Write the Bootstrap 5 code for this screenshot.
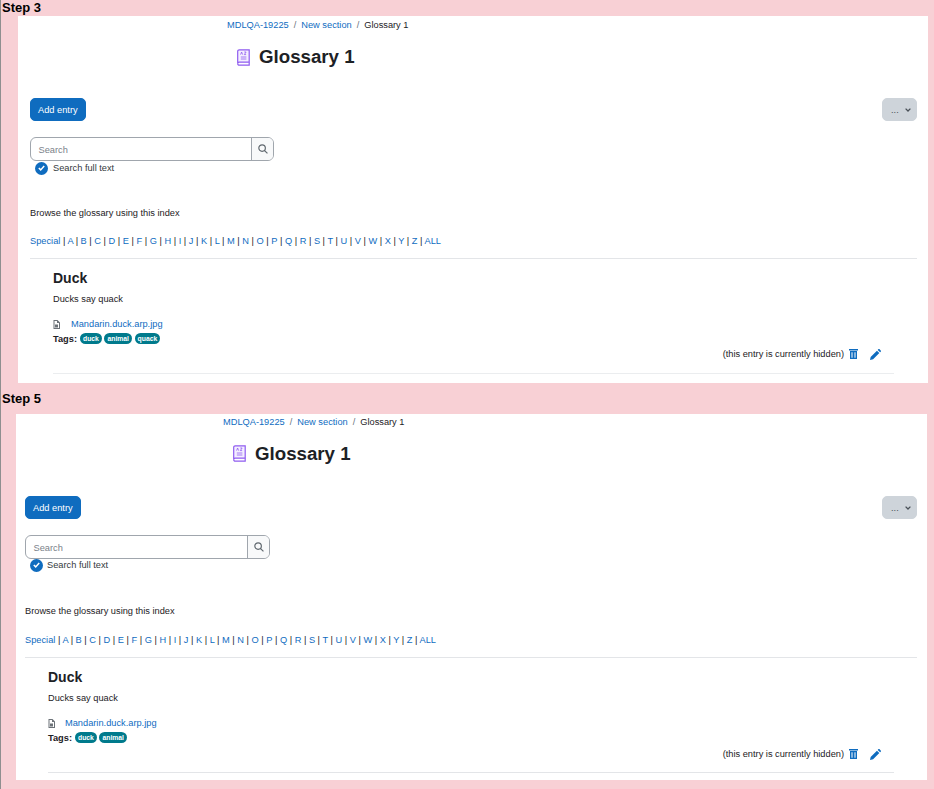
<!DOCTYPE html>
<html lang="en">
<head>
<meta charset="utf-8">
<title>Glossary 1</title>
<link href="https://cdn.jsdelivr.net/npm/bootstrap@5.3.0/dist/css/bootstrap.min.css" rel="stylesheet">
<style>
html,body{height:789px;overflow:hidden}
body{background:#f8d0d5;border-left:1px solid #8f8f8f;font-family:"Liberation Sans",Arial,sans-serif;font-size:9.25px;line-height:14px;color:#1d2125}
a{color:#0f6cbf;text-decoration:none}
.step-label{font-size:13px;font-weight:700;line-height:16px;color:#000;margin:0;padding-left:1px}
.shot{background:#fff}
.shot-a{margin:0 6px 0 17px;height:367px;padding:0 11px 0 12px}
.shot-b{margin:0 7px 0 15px;height:366px;padding:0 10px 0 9px}
.step-two{margin-top:7px;height:24px;padding-top:1px}
.crumbs{height:18px;align-items:center;white-space:nowrap}
.shot-a .crumbs{padding-left:197px}
.shot-b .crumbs{padding-left:198px;height:16px}
.sep{color:#6a737b;margin:0 5px}
.title-row{height:46px;align-items:center}
.shot-a .title-row{padding:0 0 0 207px}
.shot-b .title-row{padding:0 0 0 208px;height:47px}
.title-row svg{margin-right:9px}
.page-name{font-size:18.7px;font-weight:700;margin:0;line-height:24px;color:#1d2125}
.actions{align-items:center;justify-content:space-between;height:23px;margin-top:18px}
.shot-b .actions{margin-top:19px}
.btn.add-btn{background:#0f6cbf;border-color:#0f6cbf;color:#fff;font-size:9.25px;line-height:14px;padding:4px 7px;border-radius:5px;height:23px}
.btn.more-btn{background:#ced4da;border-color:#ced4da;color:#495057;font-size:9.25px;line-height:14px;padding:4px 0 4px 8px;border-radius:5px;width:35px;height:23px;white-space:nowrap;text-align:left}
.more-btn svg{margin-left:4px;vertical-align:1px}
.find-box{width:244px;height:24px;margin-top:16px;border:1px solid #a0a6ad;border-radius:6px;overflow:hidden}
.shot-b .find-box{width:245px}
.find-text{flex:1;padding-left:7.5px;color:#7a828a;line-height:24px}
.find-go{width:22px;border-left:1px solid #a0a6ad;background:#f8f9fa;align-items:center;justify-content:center}
.full-text{margin-left:5px;height:14px;align-items:center;gap:5px;color:#343a40}
.shot-b .full-text{margin-top:-1px;gap:4px}
.tick{width:13px;height:13px;border-radius:50%;background:#0f6cbf;align-items:center;justify-content:center}
.browse{margin:31px 0 0;height:14px}
.shot-b .browse{margin-top:32px}
.letters{margin:14px 0 0;height:14px;white-space:nowrap}
.shot-b .letters{margin-top:15px}
.rule-top{border-top:1px solid #e3e5e8;margin-top:10px}
.entry{padding:0 23px;margin:0}
.entry-name{font-size:14px;font-weight:700;line-height:17px;margin:11px 0 0;color:#1d2125}
.entry-text{margin:5px 0 0;height:14px}
.file-row{margin-top:11px;height:14px;align-items:center}
.file-row svg{margin-right:11px}
.shot-b .file-row svg{margin-right:10px}
.tags-row{height:15px;align-items:center;font-weight:700;gap:3px}
.tag-pill{background:#007a8c;color:#fff;font-size:6.8px;line-height:11px;padding:0 3px;border-radius:5.5px;font-weight:700;height:11px;display:inline-block}
.tag-list{gap:2.6px}
.state-row{justify-content:flex-end;align-items:center;height:14px;margin-top:1px;padding-right:13px}
.shot-b .state-row{margin-top:2px}
.state-row .bin{margin:0 12px 0 5px}
.rule-end{border-top:1px solid #ebedef;margin-top:12px}
.shot-b .rule-end{border-top-color:#e3e5e8;margin-top:11px}
</style>
</head>
<body>
<h2 class="step-label">Step 3</h2>
<main class="shot shot-a">
  <nav class="crumbs d-flex"><a href="#">MDLQA-19225</a><span class="sep">/</span><a href="#">New section</a><span class="sep">/</span><span>Glossary 1</span></nav>
  <div class="title-row d-flex">
    <svg width="13" height="17" viewBox="0 0 13 17" fill="#f4efff" stroke="#8f5cf0" stroke-width="1.2"><path d="M2.2.8h10v12.4h-10a1.5 1.5 0 0 0-1.5 1.5V2.300A1.500 1.500 0 0 1 2.200.8z"/><path d="M.7 14.700a1.500 1.500 0 0 0 1.500 1.500h10v-3" fill="none"/><path d="M3.600 5.600 4.600 3l1 2.600M7.300 3h1.800L7.300 5.600h1.800M3.800 8h5.600M3.800 10h5.600" fill="none" stroke-width=".8"/></svg>
    <h1 class="page-name">Glossary 1</h1>
  </div>
  <div class="actions d-flex">
    <a class="btn add-btn" href="#">Add entry</a>
    <button class="btn more-btn" type="button">... <svg width="6" height="4" viewBox="0 0 6 4" fill="none" stroke="#495057" stroke-width="1.3"><path d="m.6.6 2.400 2.400L5.400.6"/></svg></button>
  </div>
  <div class="find-box d-flex">
    <div class="find-text">Search</div>
    <div class="find-go d-flex"><svg width="10" height="10" viewBox="0 0 11 11" fill="none" stroke="#5f676e" stroke-width="1.3"><circle cx="4.500" cy="4.500" r="3.600"/><path d="m7.200 7.200 3.200 3.200"/></svg></div>
  </div>
  <div class="full-text d-flex"><span class="tick d-flex"><svg width="7" height="6" viewBox="0 0 7 6" fill="none" stroke="#fff" stroke-width="1.5"><path d="m.8 3 1.900 1.900L6.200 1"/></svg></span><span>Search full text</span></div>
  <p class="browse">Browse the glossary using this index</p>
  <div class="letters"><a href="#">Special</a> | <a href="#">A</a> | <a href="#">B</a> | <a href="#">C</a> | <a href="#">D</a> | <a href="#">E</a> | <a href="#">F</a> | <a href="#">G</a> | <a href="#">H</a> | <a href="#">I</a> | <a href="#">J</a> | <a href="#">K</a> | <a href="#">L</a> | <a href="#">M</a> | <a href="#">N</a> | <a href="#">O</a> | <a href="#">P</a> | <a href="#">Q</a> | <a href="#">R</a> | <a href="#">S</a> | <a href="#">T</a> | <a href="#">U</a> | <a href="#">V</a> | <a href="#">W</a> | <a href="#">X</a> | <a href="#">Y</a> | <a href="#">Z</a> | <a href="#">ALL</a></div>
  <div class="rule-top"></div>
  <article class="entry">
    <h3 class="entry-name">Duck</h3>
    <p class="entry-text">Ducks say quack</p>
    <div class="file-row d-flex"><svg width="7" height="9" viewBox="0 0 7 9" fill="#6c7278"><path d="M.5 0h4L7 2.500V9H.5zM1.500 1v7h4.500V3H4V1z"/><rect x="2" y="4.500" width="3" height="3"/></svg><a href="#">Mandarin.duck.arp.jpg</a></div>
    <div class="tags-row d-flex"><span>Tags:</span><span class="tag-list d-flex"><a class="tag-pill" href="#">duck</a><a class="tag-pill" href="#">animal</a><a class="tag-pill" href="#">quack</a></span></div>
    <div class="state-row d-flex"><span>(this entry is currently hidden)</span>
      <svg class="bin" width="9" height="10" viewBox="0 0 9 10" fill="#0f6cbf"><path d="M0 0h9v1.500H0zM1 2h7v8H1zM2.500 3.200v5.600h1V3.200zM5.500 3.200v5.600h1V3.200z" fill-rule="evenodd"/></svg>
      <svg width="11" height="11" viewBox="0 0 10 10" fill="#0f6cbf"><path d="M0 10l.6-2.800L6.300 1.500l2.200 2.200L2.800 9.400zM7 .8 7.700.1a.6.6 0 0 1 .8 0l1.400 1.400a.6.6 0 0 1 0 .8L9.200 3z"/></svg></div>
    <div class="rule-end"></div>
  </article>
</main>
<h2 class="step-label step-two">Step 5</h2>
<main class="shot shot-b">
  <nav class="crumbs d-flex"><a href="#">MDLQA-19225</a><span class="sep">/</span><a href="#">New section</a><span class="sep">/</span><span>Glossary 1</span></nav>
  <div class="title-row d-flex">
    <svg width="13" height="17" viewBox="0 0 13 17" fill="#f4efff" stroke="#8f5cf0" stroke-width="1.2"><path d="M2.200.8h10v12.400h-10a1.500 1.500 0 0 0-1.500 1.500V2.300A1.500 1.500 0 0 1 2.200.8z"/><path d="M.7 14.700a1.500 1.500 0 0 0 1.500 1.500h10v-3" fill="none"/><path d="M3.600 5.600 4.600 3l1 2.600M7.300 3h1.800L7.300 5.600h1.800M3.800 8h5.600M3.800 10h5.600" fill="none" stroke-width=".8"/></svg>
    <h1 class="page-name">Glossary 1</h1>
  </div>
  <div class="actions d-flex">
    <a class="btn add-btn" href="#">Add entry</a>
    <button class="btn more-btn" type="button">... <svg width="6" height="4" viewBox="0 0 6 4" fill="none" stroke="#495057" stroke-width="1.3"><path d="m.6.6 2.400 2.400L5.400.6"/></svg></button>
  </div>
  <div class="find-box d-flex">
    <div class="find-text">Search</div>
    <div class="find-go d-flex"><svg width="10" height="10" viewBox="0 0 11 11" fill="none" stroke="#5f676e" stroke-width="1.3"><circle cx="4.500" cy="4.500" r="3.600"/><path d="m7.200 7.200 3.200 3.200"/></svg></div>
  </div>
  <div class="full-text d-flex"><span class="tick d-flex"><svg width="7" height="6" viewBox="0 0 7 6" fill="none" stroke="#fff" stroke-width="1.5"><path d="m.8 3 1.900 1.900L6.200 1"/></svg></span><span>Search full text</span></div>
  <p class="browse">Browse the glossary using this index</p>
  <div class="letters"><a href="#">Special</a> | <a href="#">A</a> | <a href="#">B</a> | <a href="#">C</a> | <a href="#">D</a> | <a href="#">E</a> | <a href="#">F</a> | <a href="#">G</a> | <a href="#">H</a> | <a href="#">I</a> | <a href="#">J</a> | <a href="#">K</a> | <a href="#">L</a> | <a href="#">M</a> | <a href="#">N</a> | <a href="#">O</a> | <a href="#">P</a> | <a href="#">Q</a> | <a href="#">R</a> | <a href="#">S</a> | <a href="#">T</a> | <a href="#">U</a> | <a href="#">V</a> | <a href="#">W</a> | <a href="#">X</a> | <a href="#">Y</a> | <a href="#">Z</a> | <a href="#">ALL</a></div>
  <div class="rule-top"></div>
  <article class="entry">
    <h3 class="entry-name">Duck</h3>
    <p class="entry-text">Ducks say quack</p>
    <div class="file-row d-flex"><svg width="7" height="9" viewBox="0 0 7 9" fill="#6c7278"><path d="M.5 0h4L7 2.500V9H.5zM1.500 1v7h4.500V3H4V1z"/><rect x="2" y="4.500" width="3" height="3"/></svg><a href="#">Mandarin.duck.arp.jpg</a></div>
    <div class="tags-row d-flex"><span>Tags:</span><span class="tag-list d-flex"><a class="tag-pill" href="#">duck</a><a class="tag-pill" href="#">animal</a></span></div>
    <div class="state-row d-flex"><span>(this entry is currently hidden)</span>
      <svg class="bin" width="9" height="10" viewBox="0 0 9 10" fill="#0f6cbf"><path d="M0 0h9v1.500H0zM1 2h7v8H1zM2.500 3.200v5.600h1V3.200zM5.500 3.200v5.600h1V3.200z" fill-rule="evenodd"/></svg>
      <svg width="11" height="11" viewBox="0 0 10 10" fill="#0f6cbf"><path d="M0 10l.6-2.800L6.300 1.500l2.200 2.200L2.800 9.400zM7 .8 7.700.1a.6.6 0 0 1 .8 0l1.400 1.400a.6.6 0 0 1 0 .8L9.200 3z"/></svg></div>
    <div class="rule-end"></div>
  </article>
</main>
<script src="https://cdn.jsdelivr.net/npm/bootstrap@5.3.0/dist/js/bootstrap.bundle.min.js"></script>
</body>
</html>
